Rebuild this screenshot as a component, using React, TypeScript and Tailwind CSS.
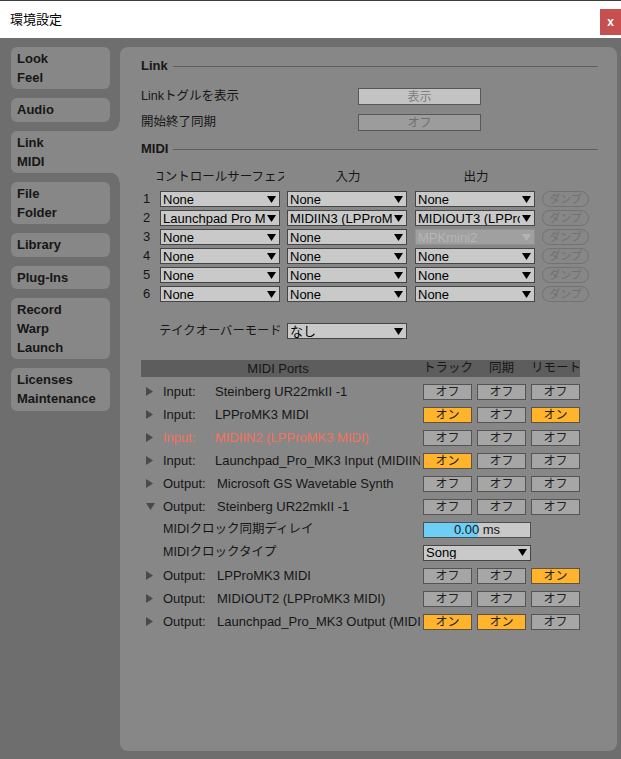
import React from "react";

const font = "font-['Liberation_Sans','Noto_Sans_CJK_JP',sans-serif]";

function Arrow({ faint }: { faint?: boolean }) {
  return (
    <svg width="9" height="7" viewBox="0 0 9 7" className="shrink-0">
      <polygon points="0,0 9,0 4.5,7" fill={faint ? "#b4b4b4" : "#000"} />
    </svg>
  );
}

function Select({ value, w = "w-[120px]", disabled }: { value: string; w?: string; disabled?: boolean }) {
  return (
    <div
      className={`flex h-[16px] ${w} items-center gap-[2px] border pl-[2px] pr-[3px] text-[13px] leading-none ${
        disabled ? "border-[#929292] bg-[#a0a0a0] text-[#b6b6b6]" : "border-[#454545] bg-[#c9c9c9] text-black"
      }`}
    >
      <span className="min-w-0 flex-1 overflow-hidden whitespace-nowrap">{value}</span>
      <Arrow faint={disabled} />
    </div>
  );
}

function Toggle({ on }: { on?: boolean }) {
  return (
    <div
      className={`flex h-[16px] w-[49px] items-center justify-center border text-[12px] leading-none text-[#1e1e1e] ${
        on ? "border-[#5d5246] bg-[#ffb42c]" : "border-[#545454] bg-[#a6a6a6]"
      }`}
    >
      {on ? "オン" : "オフ"}
    </div>
  );
}

function Tab({ lines, h, active }: { lines: string[]; h: string; active?: boolean }) {
  const text = lines.map((l) => (
    <div key={l} className="h-[19px] text-[13px] leading-[19px] font-bold text-[#161616]">{l}</div>
  ));
  if (active) {
    return (
      <div className={`relative -mr-[10px] ${h} rounded-l-[6px] bg-[#878787] pt-[2px] pl-[6px]`}>
        {text}
        <div className="absolute -top-[9px] right-0 h-[9px] w-[10px] bg-[radial-gradient(circle_at_0_0,#6e6e6e_9px,#878787_9.5px)]" />
        <div className="absolute -bottom-[9px] right-0 h-[9px] w-[10px] bg-[radial-gradient(circle_at_0_100%,#6e6e6e_9px,#878787_9.5px)]" />
      </div>
    );
  }
  return <div className={`${h} rounded-[6px] bg-[#878787] pt-[2px] pl-[6px]`}>{text}</div>;
}

function Heading({ title }: { title: string }) {
  return (
    <div className="flex h-[18px] items-center gap-[5px]">
      <span className="text-[13px] font-bold text-[#161616]">{title}</span>
      <div className="h-px flex-1 bg-[#5e5e5e]" />
    </div>
  );
}

const surfaces = [
  ["None", "None", "None"],
  ["Launchpad Pro MK3", "MIDIIN3 (LPProMK3 MIDI)", "MIDIOUT3 (LPProMK3 MIDI)"],
  ["None", "None", "MPKmini2"],
  ["None", "None", "None"],
  ["None", "None", "None"],
  ["None", "None", "None"],
];

type Port = { kind: "Input" | "Output"; name: string; t: boolean; s: boolean; r: boolean; red?: boolean; open?: boolean };

const ports: Port[] = [
  { kind: "Input", name: "Steinberg UR22mkII -1", t: false, s: false, r: false },
  { kind: "Input", name: "LPProMK3 MIDI", t: true, s: false, r: true },
  { kind: "Input", name: "MIDIIN2 (LPProMK3 MIDI)", t: false, s: false, r: false, red: true },
  { kind: "Input", name: "Launchpad_Pro_MK3 Input (MIDIIN)", t: true, s: false, r: false },
  { kind: "Output", name: "Microsoft GS Wavetable Synth", t: false, s: false, r: false },
  { kind: "Output", name: "Steinberg UR22mkII -1", t: false, s: false, r: false, open: true },
  { kind: "Output", name: "LPProMK3 MIDI", t: false, s: false, r: true },
  { kind: "Output", name: "MIDIOUT2 (LPProMK3 MIDI)", t: false, s: false, r: false },
  { kind: "Output", name: "Launchpad_Pro_MK3 Output (MIDIOUT)", t: true, s: true, r: false },
];

function PortRow({ p }: { p: Port }) {
  const color = p.red ? "text-[#f4725f]" : "text-[#161616]";
  return (
    <div className={`flex h-[23px] items-center text-[13px] ${color}`}>
      <div className="flex w-[22px] pl-[5px]">
        {p.open ? (
          <svg width="9" height="7" viewBox="0 0 9 7">
            <polygon points="0,0 9,0 4.5,7" fill="#4a4a4a" />
          </svg>
        ) : (
          <svg width="7" height="9" viewBox="0 0 7 9">
            <polygon points="0,0 7,4.5 0,9" fill="#4a4a4a" />
          </svg>
        )}
      </div>
      <div className={`${p.kind === "Input" ? "w-[52px]" : "w-[54px]"} shrink-0 whitespace-nowrap`}>{p.kind}:</div>
      <div className="min-w-0 flex-1 overflow-hidden whitespace-nowrap">{p.name}</div>
      <div className="ml-[3px] flex gap-[5px]">
        <Toggle on={p.t} />
        <Toggle on={p.s} />
        <Toggle on={p.r} />
      </div>
    </div>
  );
}

export default function App() {
  return (
    <div className={`flex h-[759px] w-[621px] flex-col overflow-hidden border-t border-[#3c3c3c] bg-[#6e6e6e] ${font}`}>
      {/* title bar */}
      <div className="flex h-[37px] shrink-0 items-center justify-between bg-white pl-[10px]">
        <span className="text-[13px] text-black">環境設定</span>
        <div className="mt-[5px] flex h-[26px] w-[21px] items-center justify-center bg-[#c64f4f] text-[12px] font-bold text-white">x</div>
      </div>

      <div className="flex flex-1 pt-[9px] pl-[11px] pr-[4px] pb-[8px]">
        {/* sidebar */}
        <div className="flex w-[99px] shrink-0 flex-col gap-[9px]">
          <Tab lines={["Look", "Feel"]} h="h-[42px]" />
          <Tab lines={["Audio"]} h="h-[24px]" />
          <Tab lines={["Link", "MIDI"]} h="h-[42px]" active />
          <Tab lines={["File", "Folder"]} h="h-[42px]" />
          <Tab lines={["Library"]} h="h-[24px]" />
          <Tab lines={["Plug-Ins"]} h="h-[23px]" />
          <Tab lines={["Record", "Warp", "Launch"]} h="h-[61px]" />
          <Tab lines={["Licenses", "Maintenance"]} h="h-[43px]" />
        </div>

        {/* main panel */}
        <div className="ml-[10px] flex flex-1 flex-col rounded-[8px] bg-[#878787] pl-[21px] pr-[19px] text-[13px] text-[#161616]">
          <div className="mt-[10px]">
            <Heading title="Link" />
          </div>
          <div className="mt-[13px] flex h-[17px] items-center">
            <div className="w-[217px] text-[12.5px]">Linkトグルを表示</div>
            <div className="flex h-[17px] w-[123px] items-center justify-center border border-[#575757] bg-[#c3c3c3] text-[12px] text-[#7e7e7e]">表示</div>
          </div>
          <div className="mt-[9px] flex h-[17px] items-center">
            <div className="w-[217px] text-[12.5px]">開始終了同期</div>
            <div className="flex h-[17px] w-[123px] items-center justify-center border border-[#585858] bg-[#9c9c9c] text-[12px] text-[#6e6e6e]">オフ</div>
          </div>

          <div className="mt-[9px]">
            <Heading title="MIDI" />
          </div>

          <div className="mt-[11px] flex h-[16px] items-center text-[12.5px]">
            <div className="w-[16px]" />
            <div className="flex w-[127px] justify-center overflow-hidden whitespace-nowrap">コントロールサーフェス</div>
            <div className="ml-[4px] w-[120px] text-center">入力</div>
            <div className="ml-[8px] w-[120px] text-center">出力</div>
          </div>

          <div className="mt-[6px] flex flex-col gap-[3px]">
            {surfaces.map((row, i) => (
              <div key={i} className="flex h-[16px] items-center">
                <div className="w-[19px] pl-[2px]">{i + 1}</div>
                <Select value={row[0]} />
                <div className="ml-[7px]">
                  <Select value={row[1]} />
                </div>
                <div className="ml-[8px]">
                  <Select value={row[2]} disabled={i === 2} />
                </div>
                <div className="ml-[7px] flex h-[16px] w-[47px] items-center justify-center rounded-full border border-[#727272] text-[11px] leading-none text-[#707070]">
                  ダンプ
                </div>
              </div>
            ))}
          </div>

          <div className="mt-[21px] flex h-[16px] items-center">
            <div className="w-[146px] pl-[18px] text-[12.3px] whitespace-nowrap">テイクオーバーモード</div>
            <Select value="なし" />
          </div>

          {/* MIDI ports */}
          <div className="mt-[21px] w-[439px]">
            <div className="flex h-[17px] items-center bg-[#5d5d5d] text-[#161616]">
              <div className="w-[274px] text-center">MIDI Ports</div>
              <div className="ml-[8px] w-[49px] text-center text-[12.5px] whitespace-nowrap">トラック</div>
              <div className="ml-[5px] w-[49px] text-center text-[12.5px]">同期</div>
              <div className="ml-[5px] w-[49px] text-center text-[12.5px] whitespace-nowrap">リモート</div>
            </div>
            <div className="mt-[3px]">
              {ports.slice(0, 6).map((p) => (
                <PortRow key={p.kind + p.name} p={p} />
              ))}
              <div className="flex h-[23px] items-center">
                <div className="w-[22px]" />
                <div className="flex-1 text-[12.5px]">MIDIクロック同期ディレイ</div>
                <div className="relative flex h-[16px] w-[108px] items-center justify-center border border-[#4e4e4e] bg-[#c9c9c9] text-[13px]">
                  <div className="absolute inset-y-0 left-0 w-[54px] bg-[#6dcff6]" />
                  <span className="relative">0.00 ms</span>
                </div>
                <div className="w-[49px]" />
              </div>
              <div className="flex h-[23px] items-center">
                <div className="w-[22px]" />
                <div className="flex-1 text-[12.5px]">MIDIクロックタイプ</div>
                <Select value="Song" w="w-[108px]" />
                <div className="w-[49px]" />
              </div>
              {ports.slice(6).map((p) => (
                <PortRow key={p.kind + p.name} p={p} />
              ))}
            </div>
          </div>
        </div>
      </div>
    </div>
  );
}
